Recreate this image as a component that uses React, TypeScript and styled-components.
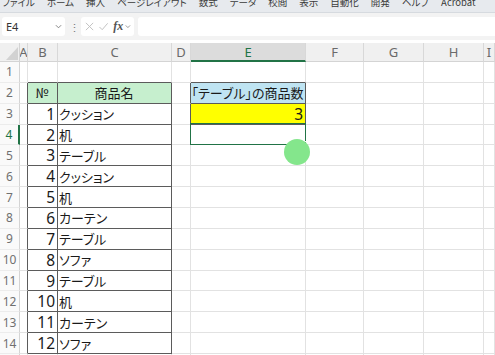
import styled, { createGlobalStyle } from "styled-components";

const GlobalStyle = createGlobalStyle`
    body {
        margin: 0;
        overflow: hidden;
        background: #ffffff;
        font-family: "Noto Sans CJK JP", "Noto Sans", sans-serif;
        font-feature-settings: "palt";
    }
`

const DARK = "#5b5b5b";
const GRID = "#e2e2e2";
const GREEN = "#217346";

const menus = ["ファイル", "ホーム", "挿入", "ページレイアウト", "数式", "データ", "校閲", "表示", "自動化", "開発", "ヘルプ", "Acrobat"];
const columns = ["A", "B", "C", "D", "E", "F", "G", "H", "I"];
const items = ["クッション", "机", "テーブル", "クッション", "机", "カーテン", "テーブル", "ソファ", "テーブル", "机", "カーテン", "ソファ"];
const rows = Array.from({ length: 15 }, (_, i) => i + 1);

type CellSpec = {
    text?: string;
    bg?: string;
    align?: "left" | "right" | "center";
    right?: string;
    bottom?: string;
    big?: boolean;
};

// 각 셀의 내용/테두리
function cellSpec(r: number, c: string): CellSpec {
    const inTable = r >= 2 && r <= 14;
    if (c === "A" && inTable) return { right: DARK };
    if (c === "B") {
        if (r === 1) return { bottom: DARK };
        if (r === 2) return { text: "№", bg: "#c6efce", align: "center", right: DARK, bottom: DARK };
        if (inTable) return { text: String(r - 2), align: "right", right: DARK, bottom: DARK, big: true };
    }
    if (c === "C") {
        if (r === 1) return { bottom: DARK };
        if (r === 2) return { text: "商品名", bg: "#c6efce", align: "center", right: DARK, bottom: DARK };
        if (inTable) return { text: items[r - 3], right: DARK, bottom: DARK };
    }
    if (c === "D" && (r === 2 || r === 3)) return { right: DARK };
    if (c === "E") {
        if (r === 1) return { bottom: DARK };
        if (r === 2) return { text: "「テーブル」の商品数", bg: "#bfe4f2", align: "center", right: DARK, bottom: DARK };
        if (r === 3) return { text: "3", bg: "#ffff00", align: "right", right: DARK, bottom: DARK, big: true };
    }
    return {};
}

export default function App() {
    return (
        <Window>
            <GlobalStyle />
            <MenuBar>
                {menus.map((m) => <MenuItem key={m}>{m}</MenuItem>)}
            </MenuBar>
            <FormulaBar>
                <NameBox>
                    E4
                    <Chevron viewBox="0 0 8 5"><path d="M1 1l3 3 3-3" /></Chevron>
                </NameBox>
                <Dots>⋮</Dots>
                <FxBox>
                    <FxIcon viewBox="0 0 10 10"><path d="M1 1l8 8M9 1l-8 8" /></FxIcon>
                    <FxIcon viewBox="0 0 10 10"><path d="M0.5 5.5l3 3L9.5 1.5" /></FxIcon>
                    <FxText>fx</FxText>
                    <Chevron viewBox="0 0 8 5"><path d="M1 1l3 3 3-3" /></Chevron>
                </FxBox>
                <FormulaInput />
            </FormulaBar>
            <Sheet>
                <Corner><SelectAll /></Corner>
                {columns.map((c) => (
                    <ColHead key={c} $active={c === "E"}>{c}</ColHead>
                ))}
                {rows.map((r) => (
                    <Row key={r} r={r} />
                ))}
                <Cursor />
            </Sheet>
        </Window>
    )
}

function Row({ r }: { r: number }) {
    return (
        <>
            <RowHead $active={r === 4}>{r}</RowHead>
            {columns.map((c) => {
                const s = cellSpec(r, c);
                return (
                    <Cell
                        key={c}
                        $bg={s.bg}
                        $align={s.align}
                        $right={s.right}
                        $bottom={s.bottom}
                        $big={s.big}
                    >
                        {s.text}
                        {r === 4 && c === "E" && (
                            <Selection><FillHandle /></Selection>
                        )}
                    </Cell>
                )
            })}
        </>
    )
}

// styled components
const Window = styled.div`
    width: 495px;
    height: 355px;
    overflow: hidden;
    display: flex;
    flex-direction: column;
`

const MenuBar = styled.div`
    height: 12px;
    flex: none;
    background: #e7eaee;
    border-bottom: 1px solid #d6dadf;
    display: flex;
    align-items: flex-end;
    gap: 12px;
    padding-left: 2px;
    overflow: hidden;
`

const MenuItem = styled.span`
    font-size: 9.5px;
    line-height: 13px;
    color: #3a3a3a;
    margin-bottom: 3px;
    white-space: nowrap;
`

const FormulaBar = styled.div`
    height: 27px;
    flex: none;
    background: #f3f3f3;
    display: flex;
    align-items: center;
    padding: 0 0 0 2px;
    gap: 4px;
`

const NameBox = styled.div`
    width: 56px;
    height: 19px;
    background: #fff;
    border-radius: 3px;
    display: flex;
    align-items: center;
    justify-content: space-between;
    padding: 0 3px 0 4px;
    font-family: "Noto Sans", sans-serif;
    font-size: 11px;
    color: #333;
`

const Chevron = styled.svg`
    width: 7px;
    height: 5px;
    fill: none;
    stroke: #777;
    stroke-width: 1;
`

const Dots = styled.span`
    font-size: 11px;
    color: #777;
    width: 8px;
    text-align: center;
`

const FxBox = styled.div`
    width: 53px;
    height: 19px;
    background: #fff;
    border-radius: 3px;
    display: flex;
    align-items: center;
    gap: 5px;
    padding: 0 3px 0 4px;
    box-sizing: border-box;
`

const FxIcon = styled.svg`
    width: 11px;
    height: 11px;
    fill: none;
    stroke: #bdbdbd;
    stroke-width: 1;
`

const FxText = styled.span`
    font-family: "Liberation Serif", serif;
    font-style: italic;
    font-weight: bold;
    font-size: 12px;
    color: #555;
    margin-right: -3px;
`

const FormulaInput = styled.div`
    flex: 1;
    height: 19px;
    background: #fff;
    border-radius: 3px 0 0 3px;
`

const Sheet = styled.div`
    position: relative;
    margin-top: 3px;
    display: grid;
    grid-template-columns: 20px 8px 30px 114px 19px 115px 58px 60px 60px 1fr;
    grid-template-rows: 19px;
    grid-auto-rows: 20.86px;
`

const Corner = styled.div`
    background: #f0f0f0;
    border-bottom: 1px solid #d4d4d4;
    border-right: 1px solid #d4d4d4;
    box-sizing: border-box;
    position: relative;
`

const SelectAll = styled.div`
    position: absolute;
    right: 1px;
    bottom: 1px;
    width: 0;
    height: 0;
    border-left: 12px solid transparent;
    border-bottom: 13px solid #d2d2d2;
`

const ColHead = styled.div<{ $active?: boolean }>`
    background: ${(p) => (p.$active ? "#dcdcdc" : "#f0f0f0")};
    color: ${(p) => (p.$active ? GREEN : "#6a6a6a")};
    border-right: 1px solid #d8d8d8;
    border-bottom: ${(p) => (p.$active ? `2px solid ${GREEN}` : "1px solid #d4d4d4")};
    box-sizing: border-box;
    display: flex;
    align-items: center;
    justify-content: center;
    font-family: "Noto Sans", sans-serif;
    font-size: 13px;
    overflow: hidden;
`

const RowHead = styled.div<{ $active?: boolean }>`
    background: #fafafa;
    color: ${(p) => (p.$active ? GREEN : "#707070")};
    border-right: ${(p) => (p.$active ? `2px solid ${GREEN}` : "1px solid #d4d4d4")};
    border-bottom: 1px solid #ececec;
    box-sizing: border-box;
    display: flex;
    align-items: center;
    justify-content: center;
    font-family: "Noto Sans", sans-serif;
    font-size: 12px;
`

const Cell = styled.div<{ $bg?: string; $align?: string; $right?: string; $bottom?: string; $big?: boolean }>`
    position: relative;
    background: ${(p) => p.$bg || "#fff"};
    border-right: 1px solid ${(p) => p.$right || GRID};
    border-bottom: 1px solid ${(p) => p.$bottom || GRID};
    box-sizing: border-box;
    display: flex;
    align-items: center;
    justify-content: ${(p) => (p.$align === "right" ? "flex-end" : p.$align === "center" ? "center" : "flex-start")};
    padding: 0 2px 0 1px;
    font-family: ${(p) => (p.$big ? `"Noto Sans", sans-serif` : "inherit")};
    font-size: ${(p) => (p.$big ? "15.5px" : "13px")};
    color: #1a1a1a;
    white-space: nowrap;
`

const Selection = styled.div`
    position: absolute;
    left: -1px;
    top: -2px;
    right: -1px;
    bottom: -1px;
    border: 1.5px solid ${GREEN};
    pointer-events: none;
`

const FillHandle = styled.div`
    position: absolute;
    right: -3px;
    bottom: -3px;
    width: 4px;
    height: 4px;
    background: ${GREEN};
    border: 1px solid #fff;
`

const Cursor = styled.div`
    position: absolute;
    left: 284px;
    top: 96px;
    width: 26px;
    height: 26px;
    border-radius: 50%;
    background: #84e68c;
`
